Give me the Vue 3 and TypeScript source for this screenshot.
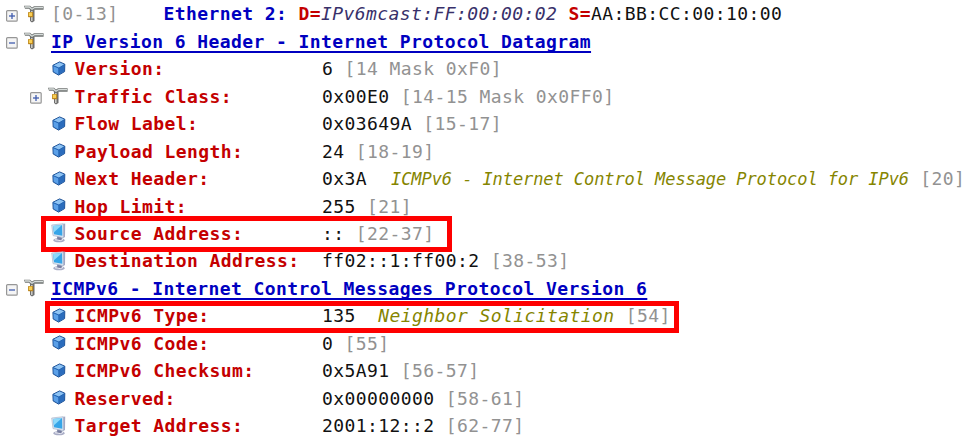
<script setup lang="ts">
type Icon = 'group' | 'cube' | 'host'
type Tone = 'label' | 'value' | 'offset' | 'note' | 'note-long' | 'name' | 'title' | 'proto'

interface Part {
  text: string
  tone: Tone
}

interface Row {
  level: 0 | 1
  icon: Icon
  toggle?: 'plus' | 'minus'
  mark?: 'source' | 'type'
  parts: Part[]
}

const LABEL_COLUMNS = 22
const LONG_NOTE = 40

function field(icon: Icon, label: string, value: string, offset: string, extra: Partial<Row> = {}, note = ''): Row {
  const parts: Part[] = [
    { text: label, tone: 'label' },
    { text: ' '.repeat(LABEL_COLUMNS - label.length) + value, tone: 'value' },
  ]
  if (note) {
    parts.push({ text: '  ', tone: 'value' })
    parts.push({ text: note, tone: note.length > LONG_NOTE ? 'note-long' : 'note' })
  }
  parts.push({ text: ' ' + offset, tone: 'offset' })
  return { level: 1, icon, parts, ...extra }
}

function header(title: string): Row {
  return { level: 0, icon: 'group', toggle: 'minus', parts: [{ text: title, tone: 'title' }] }
}

const rows: Row[] = [
  {
    level: 0,
    icon: 'group',
    toggle: 'plus',
    parts: [
      { text: '[0-13]    ', tone: 'offset' },
      { text: 'Ethernet 2: ', tone: 'proto' },
      { text: 'D=', tone: 'label' },
      { text: 'IPv6mcast:FF:00:00:02', tone: 'name' },
      { text: ' S=', tone: 'label' },
      { text: 'AA:BB:CC:00:10:00', tone: 'value' },
    ],
  },
  header('IP Version 6 Header - Internet Protocol Datagram'),
  field('cube', 'Version:', '6', '[14 Mask 0xF0]'),
  field('group', 'Traffic Class:', '0x00E0', '[14-15 Mask 0x0FF0]', { toggle: 'plus' }),
  field('cube', 'Flow Label:', '0x03649A', '[15-17]'),
  field('cube', 'Payload Length:', '24', '[18-19]'),
  field('cube', 'Next Header:', '0x3A', '[20]', {}, 'ICMPv6 - Internet Control Message Protocol for IPv6'),
  field('cube', 'Hop Limit:', '255', '[21]'),
  field('host', 'Source Address:', '::', '[22-37]', { mark: 'source' }),
  field('host', 'Destination Address:', 'ff02::1:ff00:2', '[38-53]'),
  header('ICMPv6 - Internet Control Messages Protocol Version 6'),
  field('cube', 'ICMPv6 Type:', '135', '[54]', { mark: 'type' }, 'Neighbor Solicitation'),
  field('cube', 'ICMPv6 Code:', '0', '[55]'),
  field('cube', 'ICMPv6 Checksum:', '0x5A91', '[56-57]'),
  field('cube', 'Reserved:', '0x00000000', '[58-61]'),
  field('host', 'Target Address:', '2001:12::2', '[62-77]'),
]
</script>

<template>
  <main class="tree">
    <div v-for="(row, i) in rows" :key="i" class="row" :class="'level-' + row.level">
      <span class="toggle">
        <svg v-if="row.toggle" width="12" height="12" viewBox="0 0 12 12">
          <rect x="0.6" y="0.6" width="10.6" height="10.6" rx="1" fill="#f5f5f5" stroke="#969696" stroke-width="1.2" />
          <path d="M3 6H9" stroke="#405cae" stroke-width="1.3" />
          <path v-if="row.toggle === 'plus'" d="M6 3V9" stroke="#405cae" stroke-width="1.3" />
        </svg>
      </span>
      <span class="icon">
        <svg v-if="row.icon === 'group'" class="group" width="20" height="18" viewBox="0 0 20 18">
          <path d="M6 5H10.5V16L8 17.5L6 16Z" fill="#6c6c6c" />
          <path d="M7 5H8.6V16H7Z" fill="#c9c9c5" />
          <path d="M0 .7H6L8 2.4L10 1.2H19.6V4.7H10.5L9 6H7L5 3.8H1Z" fill="#707473" />
          <path d="M1 1.2H5.6L8 3.6L10.5 2H19V3.3H10.7L8 5L5 2.7H1Z" fill="#d6dcda" />
          <rect x="4" y="7" width="5.2" height="5.2" rx=".7" fill="#bd8720" />
          <rect x="4.8" y="7.6" width="3.3" height="3.4" fill="#f7cf55" />
        </svg>
        <svg v-else-if="row.icon === 'cube'" class="cube" width="14" height="15" viewBox="0 0 14 15">
          <path d="M.9 4.3L7.6 .9L12.8 3.2L12.6 10.6L6.6 14.1L1.2 11Z" fill="#3d86da" stroke="#1d4f92" stroke-width="1" stroke-linejoin="round" />
          <path d="M1.5 4.6L7.5 1.5L12.2 3.6L6.9 6.8Z" fill="#8ec3f3" />
          <path d="M1.6 5.2L6.5 7.4V13.2L1.8 10.6Z" fill="#5ba0e8" />
          <path d="M7.2 7.2L12.2 4.2V10.3L7.2 13.3Z" fill="#2b6cbc" />
          <path d="M1.5 4.8L6.9 7L12.4 3.7M6.9 7V13.5" fill="none" stroke="#1b58a5" stroke-width=".8" />
        </svg>
        <svg v-else class="host" width="16" height="20" viewBox="0 0 16 20">
          <ellipse cx="8" cy="17.2" rx="5.8" ry="2.1" fill="#a9adc6" />
          <path d="M6 13H10.5L11 17L6.5 17.8Z" fill="#777d9f" />
          <path d="M11.5 1L14.2 .5L14 14L11.5 15.5Z" fill="#a3a7c3" />
          <path d="M.7 2L12.2 .7L12.5 14.8L2 12.6Z" fill="#d7e2ef" stroke="#aeb9cf" stroke-width=".7" />
          <path d="M2 3L11 2.1L11.3 12.8L3 11.2Z" fill="#36a5e8" />
          <path d="M2 3L11 2.1L3 9.3Z" fill="#8ed9fa" />
          <path d="M4 16.7L9.5 17.6L12 16.4" fill="none" stroke="#eff0f7" stroke-width="1" />
        </svg>
      </span>
      <span class="line"><span v-for="(part, p) in row.parts" :key="p" :class="part.tone">{{ part.text }}</span></span>
      <span v-if="row.mark" class="mark" :class="'mark-' + row.mark"></span>
    </div>
  </main>
</template>

<style>
body {
  margin: 0;
  background: #fff;
}
</style>

<style scoped>
.tree {
  box-sizing: border-box;
  width: 973px;
  height: 442px;
  overflow: hidden;
  background: #fff;
  font-family: 'DejaVu Sans Mono', monospace;
  font-size: 18px;
  letter-spacing: 0.414px;
  color: #111;
}

.row {
  position: relative;
  display: flex;
  align-items: center;
  height: 27.47px;
  padding-left: 6px;
  white-space: pre;
}

.level-1 {
  padding-left: 29.5px;
}

.toggle {
  display: flex;
  flex: none;
  width: 18px;
  padding-top: 4px;
}

.icon {
  display: flex;
  flex: none;
  width: 27px;
}

.cube {
  margin-left: 4px;
  margin-bottom: 1px;
}

.host {
  margin-left: 3px;
}

.line {
  flex: none;
  line-height: 27px;
}

.label {
  color: #c40000;
  font-weight: bold;
}

.offset {
  color: #929292;
}

.note,
.note-long {
  color: #858500;
  font-style: italic;
}

.note-long {
  margin-left: 1.5px;
  font-size: 17px;
  letter-spacing: -0.08px;
}

.name {
  color: #38306a;
  font-style: italic;
}

.proto,
.title {
  color: #0000c0;
  font-weight: bold;
}

.title {
  text-decoration: underline;
  text-decoration-thickness: 2px;
  text-underline-offset: 3px;
  text-decoration-skip-ink: none;
}

.mark {
  position: absolute;
  box-sizing: border-box;
  border: 5px solid #fe0000;
}

.mark-source {
  left: 41px;
  top: -4px;
  width: 411px;
  height: 36px;
}

.mark-type {
  left: 45px;
  top: -1px;
  width: 634px;
  height: 32px;
}
</style>
